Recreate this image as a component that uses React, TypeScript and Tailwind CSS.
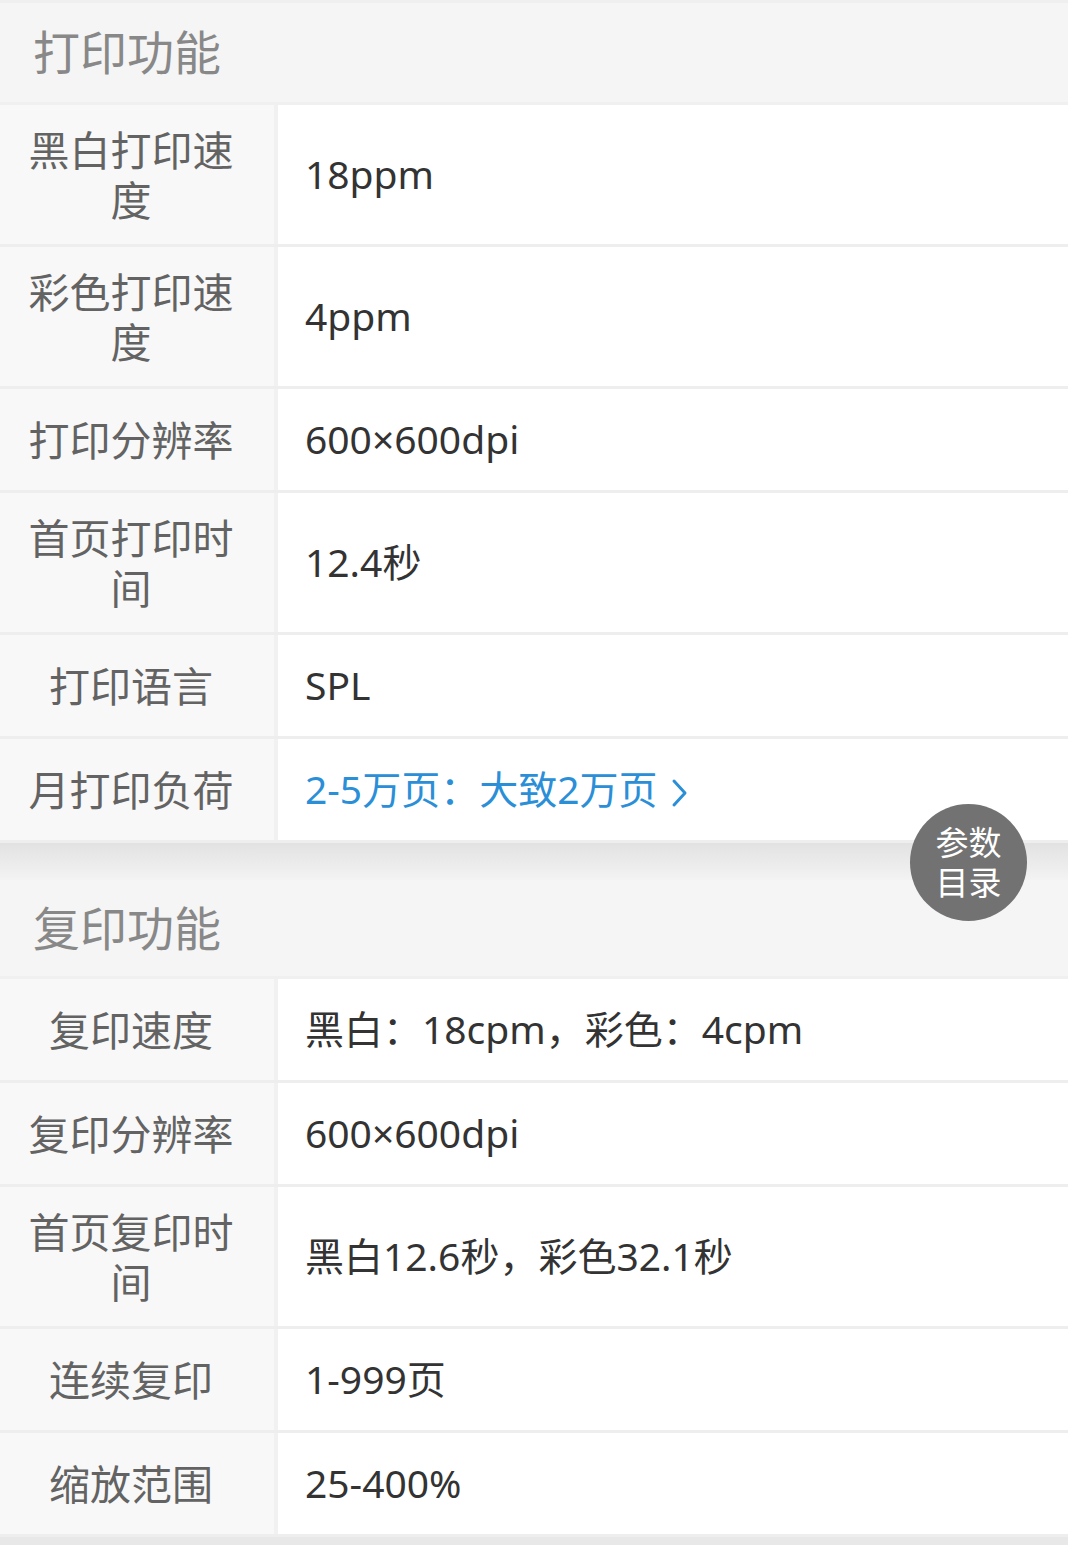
import React from "react";

type Row = { label: string; value: React.ReactNode; tall?: boolean };

const FONT = { fontFamily: '"Noto Sans", "Noto Sans CJK SC", sans-serif' };

function Chevron() {
  return (
    <svg width="18" height="30" viewBox="0 0 18 30" className="ml-[14px] mt-[6px]">
      <path d="M3 3 L14 15 L3 27" fill="none" stroke="#2b8fd8" strokeWidth="3" strokeLinecap="round" strokeLinejoin="round" />
    </svg>
  );
}

function SpecRow({ row }: { row: Row }) {
  return (
    <div className={`flex border-b-[3px] border-[#eeeeee] ${row.tall ? "h-[142px]" : "h-[104px]"}`}>
      <div className="w-[274px] shrink-0 bg-[#f8f8f8] flex items-center justify-center pl-[12px] pr-[24px]">
        <div className="text-center text-[41px] leading-[50px] text-[#636363]">{row.label}</div>
      </div>
      <div className="w-[4px] shrink-0 bg-[#f1f1f1]" />
      <div className="flex-1 bg-white flex items-center pl-[27px] text-[39px] text-[#333333]">{row.value}</div>
    </div>
  );
}

function Section({ title, rows, topBar }: { title: string; rows: Row[]; topBar?: boolean }) {
  return (
    <div>
      {topBar && <div className="h-[3px] bg-[#efefef]" />}
      <div className={`bg-[#f5f5f5] flex items-center pl-[33px] border-b-[3px] border-[#f0f0f0] ${topBar ? "h-[102px]" : "h-[99px]"}`}>
        <span className="text-[47px] text-[#888888]">{title}</span>
      </div>
      {rows.map((r, i) => (
        <SpecRow key={i} row={r} />
      ))}
    </div>
  );
}

export default function App() {
  const print: Row[] = [
    { label: "黑白打印速度", value: "18ppm", tall: true },
    { label: "彩色打印速度", value: "4ppm", tall: true },
    { label: "打印分辨率", value: "600×600dpi" },
    { label: "首页打印时间", value: "12.4秒", tall: true },
    { label: "打印语言", value: "SPL" },
    {
      label: "月打印负荷",
      value: (
        <span className="flex items-center text-[#2b8fd8]">
          2-5万页：大致2万页
          <Chevron />
        </span>
      ),
    },
  ];
  const copy: Row[] = [
    { label: "复印速度", value: "黑白：18cpm，彩色：4cpm" },
    { label: "复印分辨率", value: "600×600dpi" },
    { label: "首页复印时间", value: "黑白12.6秒，彩色32.1秒", tall: true },
    { label: "连续复印", value: "1-999页" },
    { label: "缩放范围", value: "25-400%" },
  ];
  return (
    <div className="relative w-[1068px] min-h-[1545px] bg-[#e8e8e8] overflow-hidden" style={FONT}>
      <Section title="打印功能" rows={print} topBar />
      <div className="h-[37px] bg-gradient-to-b from-[#e2e2e2] to-[#f3f3f3]" />
      <Section title="复印功能" rows={copy} />
      <div className="absolute left-[910px] top-[804px] w-[117px] h-[117px] rounded-full bg-[#727272] flex items-center justify-center">
        <div className="w-[68px] text-center text-white text-[33px] leading-[40px] break-all">参数目录</div>
      </div>
    </div>
  );
}
